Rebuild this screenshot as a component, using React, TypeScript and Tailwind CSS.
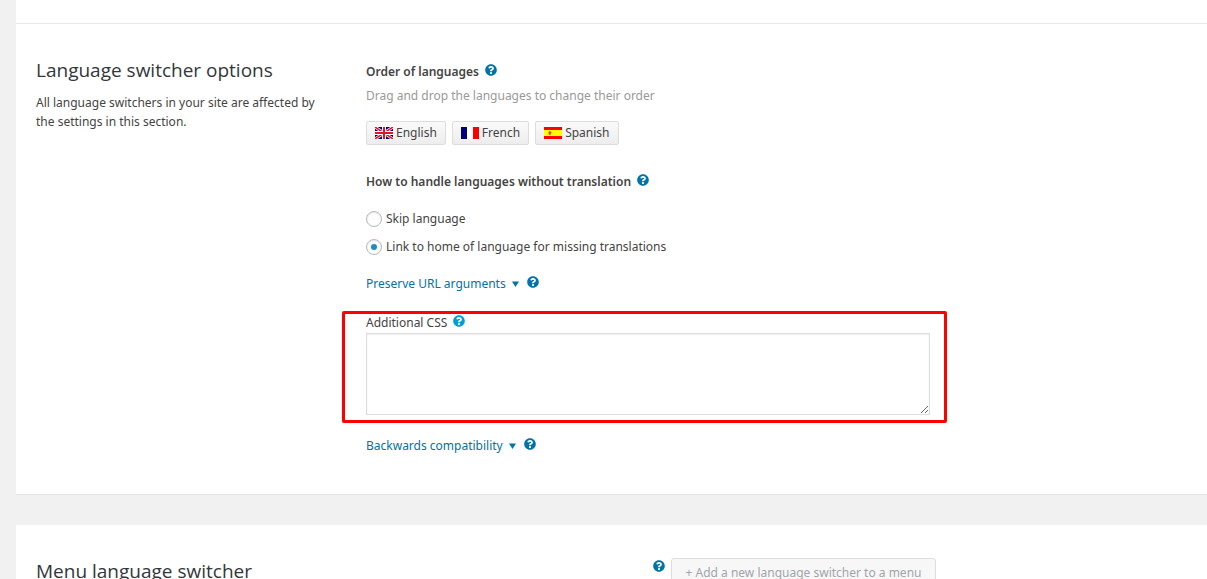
import React, { useState } from 'react';
import { FaQuestionCircle } from 'react-icons/fa';

const FlagGB: React.FC = () => (
  <svg width="18" height="12" viewBox="0 0 36 24" aria-hidden="true">
    <rect width="36" height="24" fill="#00007c" />
    <path d="M0 0L36 24M36 0L0 24" stroke="#fff" strokeWidth="6" />
    <path d="M0 0L36 24M36 0L0 24" stroke="#e0162b" strokeWidth="3" />
    <path d="M18 0V24M0 12H36" stroke="#fff" strokeWidth="8" />
    <path d="M18 0V24M0 12H36" stroke="#e0162b" strokeWidth="4" />
  </svg>
);

const FlagFR: React.FC = () => (
  <svg width="18" height="12" viewBox="0 0 18 12" aria-hidden="true">
    <rect width="18" height="12" fill="#fff" />
    <rect width="6" height="12" fill="#00007b" />
    <rect x="12" width="6" height="12" fill="#fe0000" />
  </svg>
);

const FlagES: React.FC = () => (
  <svg width="18" height="12" viewBox="0 0 18 12" aria-hidden="true">
    <rect width="18" height="12" fill="#fe0000" />
    <rect y="3" width="18" height="6" fill="#ffff00" />
    <path d="M4 5h1v-1h2v1h1v1h-1v2h-2v-1h-1z" fill="#f0a800" />
    <path d="M5 4h1v1h1v2h-1v1h-1v-2z" fill="#d2502a" />
  </svg>
);

const languages = [
  { name: 'English', flag: <FlagGB /> },
  { name: 'French', flag: <FlagFR /> },
  { name: 'Spanish', flag: <FlagES /> },
];

const missingOptions = [
  { value: 'skip', label: 'Skip language' },
  { value: 'home', label: 'Link to home of language for missing translations' },
];

interface HelpProps {
  topic: string;
  light?: boolean;
}

const Help: React.FC<HelpProps> = ({ topic, light }) => (
  <a
    href="#help"
    aria-label={`Help: ${topic}`}
    className={`mb-1 shrink-0 ${light ? 'text-[#00a0d2]' : 'text-[#0073aa]'}`}
  >
    <FaQuestionCircle className="size-3" />
  </a>
);

const SectionTitle: React.FC<{ children: React.ReactNode }> = ({ children }) => (
  <h2 className="font-['Open_Sans','Noto_Sans',sans-serif] text-[19px] leading-7 text-[#32373c]">
    {children}
  </h2>
);

const ToggleLink: React.FC<{ label: string }> = ({ label }) => (
  <div className="flex h-5 items-center gap-2">
    <a href="#toggle" className="flex items-center gap-1.5 text-[#0073aa]">
      {label}
      <svg width="7" height="6" viewBox="0 0 7 6" aria-hidden="true">
        <path d="M0 0.5H7L3.5 6z" fill="currentColor" />
      </svg>
    </a>
    <Help topic={label} />
  </div>
);

const App: React.FC = () => {
  const [missing, setMissing] = useState('home');
  const [css, setCss] = useState('');

  return (
    <div className="h-screen overflow-hidden bg-[#f1f1f1] pl-4 font-['Noto_Sans','Open_Sans',sans-serif] text-xs leading-5 text-[#444]">
      <main>
        <div className="h-6 border-b border-[#e9e9e9] bg-white" />

        {/* Language switcher options */}
        <section className="grid grid-cols-[330px_1fr] border-b border-[#e5e5e5] bg-white px-5 pt-8 pb-[38px]">
          <div className="pr-10">
            <SectionTitle>Language switcher options</SectionTitle>
            <p className="mt-[9px] leading-[19px]">
              All language switchers in your site are affected by the settings in this section.
            </p>
          </div>

          <div className="pt-1.5">
            <div className="flex h-5 items-center gap-1.5">
              <h3 className="font-semibold">Order of languages</h3>
              <Help topic="Order of languages" />
            </div>
            <p className="mt-1 text-[#999]">Drag and drop the languages to change their order</p>
            <ul className="mt-[15px] flex gap-1.5">
              {languages.map((lang) => (
                <li
                  key={lang.name}
                  className="flex h-6 cursor-move items-center gap-[3px] rounded-xs border border-[#ddd] bg-linear-to-b from-[#fafafa] to-[#ededed] px-2"
                >
                  {lang.flag}
                  {lang.name}
                </li>
              ))}
            </ul>

            <div className="mt-[27px] flex h-5 items-center gap-1.5">
              <h3 className="font-semibold">How to handle languages without translation</h3>
              <Help topic="Languages without translation" />
            </div>
            <div className="mt-[17px] flex flex-col items-start gap-2">
              {missingOptions.map((option) => (
                <label key={option.value} className="flex h-5 items-center gap-1">
                  <input
                    type="radio"
                    name="missing"
                    value={option.value}
                    checked={missing === option.value}
                    onChange={() => setMissing(option.value)}
                    className="grid size-4 appearance-none place-items-center rounded-full border border-[#b4b9be] bg-white shadow-[inset_0_1px_2px_rgba(0,0,0,0.1)] before:size-1.5 before:rounded-full checked:before:bg-[#1e8cbe]"
                  />
                  {option.label}
                </label>
              ))}
            </div>

            <div className="mt-[17px]">
              <ToggleLink label="Preserve URL arguments" />
            </div>

            <div className="relative mt-[19px] max-w-[564px]">
              <div className="flex h-5 items-center gap-1.5">
                <label htmlFor="additional-css">Additional CSS</label>
                <Help topic="Additional CSS" light />
              </div>
              <textarea
                id="additional-css"
                value={css}
                onChange={(e) => setCss(e.target.value)}
                className="block h-[82px] w-full resize border border-[#ddd] bg-white p-1.5 shadow-[inset_0_1px_2px_rgba(0,0,0,0.07)]"
              />
              {/* Highlight frame */}
              <div className="pointer-events-none absolute -top-0.5 -right-[17px] -bottom-2 -left-6 rounded-xs border-3 border-[#fe0000]" />
            </div>

            <div className="mt-[21px]">
              <ToggleLink label="Backwards compatibility" />
            </div>
          </div>
        </section>

        {/* Menu language switcher */}
        <section className="mt-[30px] bg-white px-5 pt-8 pb-10">
          <div className="flex max-w-[900px] items-start justify-between">
            <SectionTitle>Menu language switcher</SectionTitle>
            <div className="flex items-start gap-1.5 pt-px">
              <div className="flex h-5 items-center">
                <Help topic="Menu language switcher" />
              </div>
              <button
                type="button"
                disabled
                className="h-[30px] min-w-[265px] rounded-[3px] border border-[#ddd] bg-[#f7f7f7] px-2.5 text-[#a0a5aa]"
              >
                + Add a new language switcher to a menu
              </button>
            </div>
          </div>
        </section>
      </main>
    </div>
  );
};

export default App;
